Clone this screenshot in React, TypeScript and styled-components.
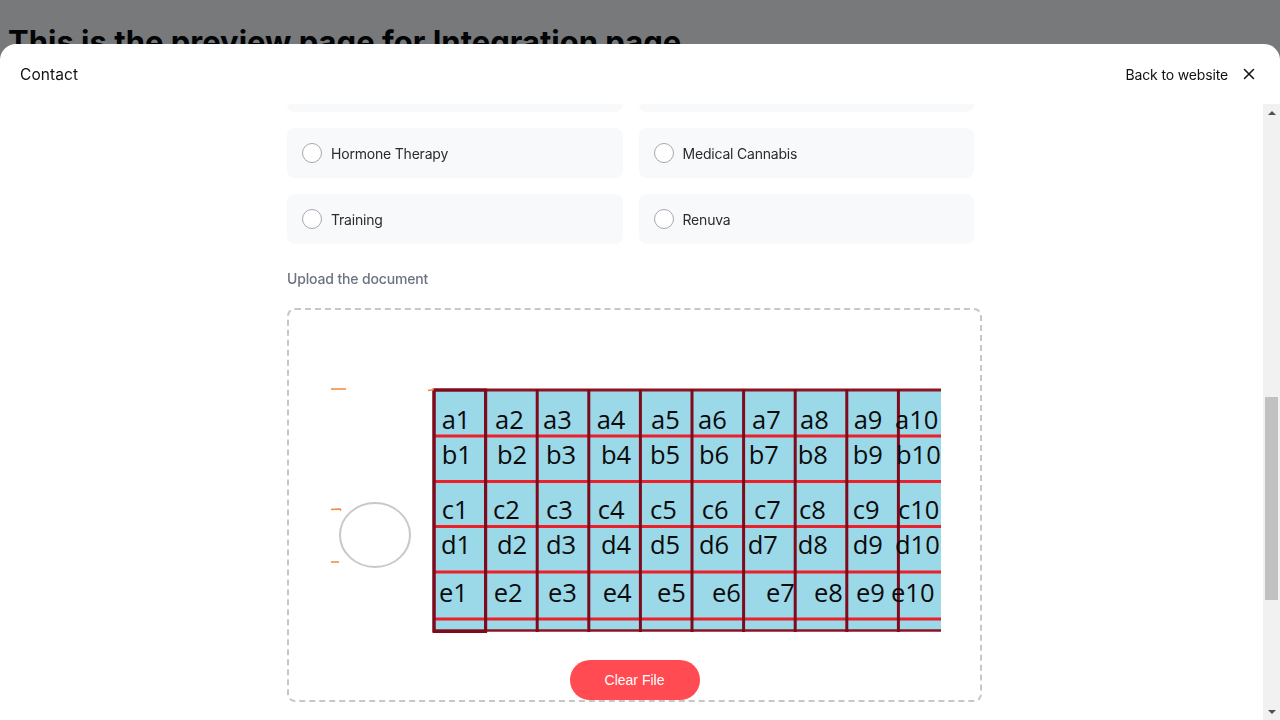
import React, { useLayoutEffect, useRef, useState } from "react";
import styled, { createGlobalStyle } from "styled-components";

const GlobalStyle = createGlobalStyle`
  html, body { background: #ffffff; }
  body { margin: 8px; font-family: Inter, "Noto Sans", sans-serif; color: #111; }
  * { box-sizing: border-box; }
`;

const PageTitle = styled.h1`
  margin: 15px 0 0;
  font-family: Inter, "Noto Sans", sans-serif;
  font-size: 31px;
  font-weight: 700;
  line-height: 38px;
  color: #000;
`;

const Backdrop = styled.div`
  position: fixed;
  inset: 0;
  background: rgba(3, 8, 12, 0.54);
`;

const Modal = styled.div`
  position: fixed;
  top: 44px;
  left: 0;
  right: 0;
  bottom: 0;
  background: #fff;
  border-radius: 16px 16px 0 0;
  display: flex;
  flex-direction: column;
  overflow: hidden;
`;

const ModalHeader = styled.header`
  height: 60px;
  flex: 0 0 60px;
  display: flex;
  align-items: center;
  justify-content: space-between;
  padding: 0 25px 0 20px;
`;

const HeaderTitle = styled.div`
  font-size: 15.5px;
  color: #111;
  letter-spacing: 0.1px;
`;

const HeaderActions = styled.div`
  display: flex;
  align-items: center;
  gap: 15px;
`;

const BackLink = styled.a`
  font-size: 14px;
  color: #111;
  text-decoration: none;
  letter-spacing: -0.15px;
`;

const CloseButton = styled.button`
  border: 0;
  background: transparent;
  padding: 0;
  width: 12px;
  height: 12px;
  display: flex;
  align-items: center;
  justify-content: center;
  cursor: pointer;
`;

const Body = styled.div`
  flex: 1;
  min-height: 0;
  display: flex;
`;

const ScrollArea = styled.div`
  flex: 1;
  overflow-y: scroll;
  scrollbar-width: none;
  &::-webkit-scrollbar {
    display: none;
  }
`;

const ScrollBar = styled.div`
  width: 17px;
  flex: 0 0 17px;
  background: #f1f1f1;
  display: flex;
  flex-direction: column;
`;

const ScrollArrow = styled.div<{ $down?: boolean }>`
  height: 17px;
  flex: 0 0 17px;
  display: flex;
  align-items: center;
  justify-content: center;
  &::after {
    content: "";
    width: 0;
    height: 0;
    border-left: 4px solid transparent;
    border-right: 4px solid transparent;
    ${(p) =>
      p.$down ? "border-top: 4px solid #505050;" : "border-bottom: 4px solid #505050;"}
  }
`;

const ScrollTrack = styled.div`
  flex: 1;
  display: flex;
  flex-direction: column;
  padding: 0 2px;
`;

const ScrollThumb = styled.div`
  background: #c1c1c1;
  flex: 0 0 auto;
`;

const Center = styled.div`
  display: flex;
  justify-content: center;
  padding-left: 6px;
`;

const FormColumn = styled.form`
  width: 695px;
  padding: 47px 0 250px;
  display: flex;
  flex-direction: column;
`;

const FormTitle = styled.h2`
  margin: 0 0 8px;
  font-size: 28px;
  font-weight: 700;
  color: #111;
`;

const FormSubtitle = styled.p`
  margin: 0 0 32px;
  font-size: 14px;
  color: #6b7280;
`;

const FieldRow = styled.div<{ $cols?: number }>`
  display: grid;
  grid-template-columns: repeat(${(p) => p.$cols ?? 1}, 1fr);
  gap: 16px;
  margin-bottom: 24px;
`;

const Field = styled.label`
  display: flex;
  flex-direction: column;
  gap: 8px;
`;

const FieldLabel = styled.span`
  font-size: 14px;
  font-weight: 500;
  color: #6b7280;
`;

const Input = styled.input`
  height: 48px;
  border: 1px solid #e5e7eb;
  border-radius: 8px;
  background: #f8f9fb;
  padding: 0 14px;
  font: inherit;
  font-size: 14px;
`;

const TextArea = styled.textarea`
  height: 120px;
  border: 1px solid #e5e7eb;
  border-radius: 8px;
  background: #f8f9fb;
  padding: 12px 14px;
  font: inherit;
  font-size: 14px;
  resize: none;
`;

const SectionLabel = styled.div<{ $mt?: number; $mb?: number }>`
  font-size: 14px;
  font-weight: 500;
  color: #6b7280;
  line-height: 20px;
  letter-spacing: -0.15px;
  margin-top: ${(p) => p.$mt ?? 0}px;
  margin-bottom: ${(p) => p.$mb ?? 14}px;
`;

const OptionGrid = styled.div`
  display: grid;
  grid-template-columns: 1fr 1fr;
  gap: 16px;
  width: calc(100% - 8px);
`;

const Option = styled.label`
  height: 50px;
  border-radius: 8px;
  background: #f8f9fb;
  display: flex;
  align-items: center;
  gap: 9px;
  padding-left: 15px;
  font-size: 14px;
  letter-spacing: -0.2px;
  color: #2b2b2b;
  cursor: pointer;
`;

const RadioCircle = styled.span`
  width: 20px;
  height: 20px;
  border-radius: 50%;
  border: 1px solid #a3a8b1;
  background: #fff;
  flex: 0 0 20px;
`;

const UploadBox = styled.div`
  height: 394px;
  border: 2px dashed #c7c7c7;
  border-radius: 8px;
  display: flex;
  flex-direction: column;
  align-items: center;
  padding-top: 74px;
`;

const Preview = styled.svg`
  display: block;
  flex: 0 0 auto;
`;

const ClearButton = styled.button`
  margin-top: 26px;
  width: 130px;
  height: 40px;
  border: 0;
  border-radius: 20px;
  background: #ff4b51;
  color: #fff;
  font-family: "Liberation Sans", Arial, sans-serif;
  font-size: 14px;
  cursor: pointer;
`;

const SubmitButton = styled.button`
  margin-top: 32px;
  height: 48px;
  border: 0;
  border-radius: 24px;
  background: #111;
  color: #fff;
  font: inherit;
  font-size: 15px;
`;

const services = [
  "Aesthetics",
  "Weight Loss",
  "IV Therapy",
  "Peptides",
  "Hormone Therapy",
  "Medical Cannabis",
  "Training",
  "Renuva",
];

const OX = 328;
const OY = 384;

const rows: { y: number; items: [string, number][] }[] = [
  { y: 428.5, items: [["a1", 440.7], ["a2", 494], ["a3", 542], ["a4", 595.7], ["a5", 650], ["a6", 697], ["a7", 751], ["a8", 799], ["a9", 852.7], ["a10", 894]] },
  { y: 463.5, items: [["b1", 440.7], ["b2", 496], ["b3", 545], ["b4", 600], ["b5", 649], ["b6", 698], ["b7", 747.7], ["b8", 796.7], ["b9", 851.7], ["b10", 895]] },
  { y: 518.5, items: [["c1", 440.7], ["c2", 492], ["c3", 545], ["c4", 596.7], ["c5", 649], ["c6", 700.7], ["c7", 753], ["c8", 798], ["c9", 851.7], ["c10", 897]] },
  { y: 554, items: [["d1", 440], ["d2", 496], ["d3", 545], ["d4", 600], ["d5", 649], ["d6", 698], ["d7", 746.7], ["d8", 796.7], ["d9", 851.7], ["d10", 894]] },
  { y: 601.5, items: [["e1", 438], ["e2", 492.7], ["e3", 547], ["e4", 601.7], ["e5", 656], ["e6", 711], ["e7", 765], ["e8", 813], ["e9", 855], ["e10", 890]] },
];

const colXs = Array.from({ length: 10 }, (_, i) => 433 + i * 51.6);
const redYs = [436, 481.5, 526.5, 572, 619];

function GridPicture() {
  return (
    <Preview width={612} height={250} viewBox={`${OX} ${OY} 612 250`}>
      <rect x={OX} y={OY} width={612} height={250} fill="#ffffff" />
      <rect x={433} y={390} width={507} height={241} fill="#9bd8e8" />
      {redYs.map((y) => (
        <line key={y} x1={433} x2={940} y1={y} y2={y} stroke="#ec1f2b" strokeWidth={3} />
      ))}
      <line x1={433} x2={940} y1={390} y2={390} stroke="#8e1423" strokeWidth={3} />
      <line x1={433} x2={940} y1={630.5} y2={630.5} stroke="#8e1423" strokeWidth={2.5} />
      {colXs.map((x) => (
        <line key={x} x1={x} x2={x} y1={389} y2={632} stroke="#7d0b1b" strokeWidth={3} />
      ))}
      <rect x={433} y={390} width={51.6} height={241.5} fill="none" stroke="#7d0b1b" strokeWidth={3} />
      <line x1={330} x2={345} y1={389} y2={389} stroke="#f2873a" strokeWidth={1.5} />
      <path d="M330 509.5 L339 509 L340 510.5" fill="none" stroke="#f2873a" strokeWidth={1.5} />
      <line x1={330} x2={338} y1={562} y2={562} stroke="#f2873a" strokeWidth={1.5} />
      <line x1={427} x2={433} y1={390.5} y2={389.5} stroke="#f2873a" strokeWidth={1.5} />
      <ellipse cx={374} cy={535} rx={35} ry={32} fill="none" stroke="#c8c8c8" strokeWidth={2} />
      {rows.map((r) =>
        r.items.map(([t, x]) => (
          <text
            key={t}
            x={x}
            y={r.y}
            fontFamily="'Open Sans', 'Noto Sans', sans-serif"
            fontSize={25.5}
            fill="#0a0a0a"
          >
            {t}
          </text>
        ))
      )}
    </Preview>
  );
}

export default function App() {
  const scrollRef = useRef<HTMLDivElement>(null);
  const targetRef = useRef<HTMLLabelElement>(null);
  const trackRef = useRef<HTMLDivElement>(null);
  const [thumb, setThumb] = useState({ top: 0, height: 0 });

  const updateThumb = () => {
    const c = scrollRef.current;
    const tr = trackRef.current;
    if (!c || !tr) return;
    const len = tr.clientHeight;
    const total = c.scrollHeight;
    setThumb({
      top: (c.scrollTop / total) * len,
      height: (c.clientHeight / total) * len,
    });
  };

  useLayoutEffect(() => {
    const c = scrollRef.current;
    const t = targetRef.current;
    if (!c || !t) return;
    const delta = t.getBoundingClientRect().top - c.getBoundingClientRect().top;
    c.scrollTop = c.scrollTop + delta - 24;
    updateThumb();
  }, []);

  return (
    <>
      <GlobalStyle />
      <PageTitle>This is the preview page for Integration page</PageTitle>
      <Backdrop />
      <Modal>
        <ModalHeader>
          <HeaderTitle>Contact</HeaderTitle>
          <HeaderActions>
            <BackLink href="#">Back to website</BackLink>
            <CloseButton aria-label="Close">
              <svg width="12" height="12" viewBox="0 0 12 12">
                <path d="M1.5 1.5 L10.5 10.5 M10.5 1.5 L1.5 10.5" stroke="#111" strokeWidth="1.5" strokeLinecap="round" />
              </svg>
            </CloseButton>
          </HeaderActions>
        </ModalHeader>
        <Body>
          <ScrollArea ref={scrollRef} onScroll={updateThumb}>
            <Center>
              <FormColumn onSubmit={(e) => e.preventDefault()}>
                <FormTitle>Get in touch</FormTitle>
                <FormSubtitle>Fill in the form and our team will get back to you.</FormSubtitle>
                <FieldRow $cols={2}>
                  <Field>
                    <FieldLabel>First name</FieldLabel>
                    <Input />
                  </Field>
                  <Field>
                    <FieldLabel>Last name</FieldLabel>
                    <Input />
                  </Field>
                </FieldRow>
                <FieldRow $cols={2}>
                  <Field>
                    <FieldLabel>Email</FieldLabel>
                    <Input />
                  </Field>
                  <Field>
                    <FieldLabel>Phone</FieldLabel>
                    <Input />
                  </Field>
                </FieldRow>
                <FieldRow>
                  <Field>
                    <FieldLabel>Clinic name</FieldLabel>
                    <Input />
                  </Field>
                </FieldRow>
                <FieldRow>
                  <Field>
                    <FieldLabel>Address</FieldLabel>
                    <Input />
                  </Field>
                </FieldRow>
                <FieldRow>
                  <Field>
                    <FieldLabel>Message</FieldLabel>
                    <TextArea />
                  </Field>
                </FieldRow>
                <SectionLabel>Which service are you interested in?</SectionLabel>
                <OptionGrid>
                  {services.map((s) => (
                    <Option key={s} ref={s === "Hormone Therapy" ? targetRef : undefined}>
                      <RadioCircle />
                      {s}
                    </Option>
                  ))}
                </OptionGrid>
                <SectionLabel $mt={25} $mb={19}>Upload the document</SectionLabel>
                <UploadBox>
                  <GridPicture />
                  <ClearButton type="button">Clear File</ClearButton>
                </UploadBox>
                <SubmitButton type="submit">Submit</SubmitButton>
              </FormColumn>
            </Center>
          </ScrollArea>
          <ScrollBar aria-hidden>
            <ScrollArrow />
            <ScrollTrack ref={trackRef}>
              <ScrollThumb style={{ marginTop: thumb.top, height: thumb.height }} />
            </ScrollTrack>
            <ScrollArrow $down />
          </ScrollBar>
        </Body>
      </Modal>
    </>
  );
}
